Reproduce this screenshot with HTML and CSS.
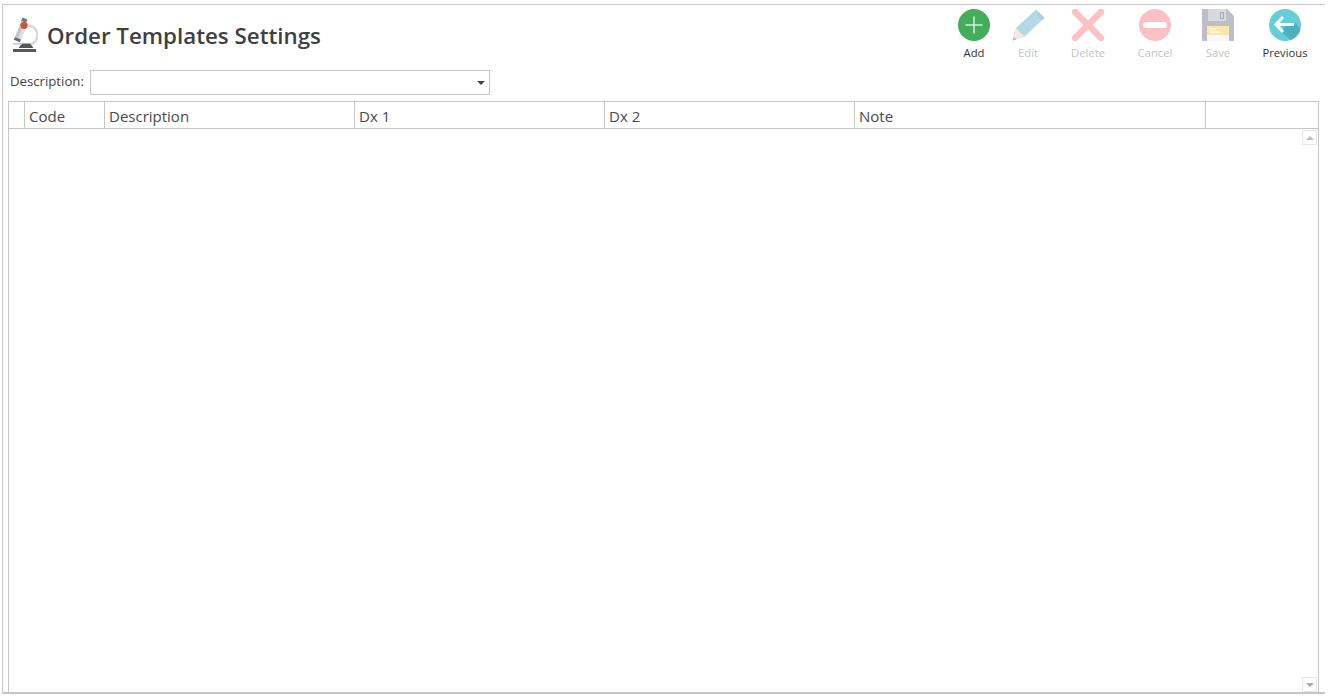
FILE: index.html
```html
<!DOCTYPE html>
<html lang="en">
<head>
<meta charset="utf-8">
<title>Order Templates Settings</title>
<link rel="stylesheet" href="styles.css">
</head>
<body>
<div class="frame">
  <header class="topbar">
    <div class="heading">
      <svg class="logo" width="26" height="38" viewBox="0 0 26 38">
        <path d="M14 9.500 A9.500 9.500 0 0 1 17 29" fill="none" stroke="#d9d9db" stroke-width="2.500"/>
        <path d="M10 27.500 h8 l3.500 4.500 h-15z" fill="#55565a"/>
        <rect x="1" y="27" width="9" height="1.600" fill="#a9d3ee"/>
        <rect x="1" y="33" width="23" height="3" fill="#58595d"/>
        <path d="M10.500 1.500 l5 2 -1.400 3.500 -5 -2z" fill="#77787c"/>
        <path d="M9.500 5 l6 2.500 -6.500 16 -6 -2.500z" fill="#c3c4c8"/>
        <path d="M12.500 6.300 l3 1.200 -6.500 16 -3 -1.200z" fill="#dedfe2"/>
        <path d="M3 21 l6 2.500 -1.200 2.800 -6 -2.500z" fill="#6d6e72"/>
        <circle cx="12" cy="9.500" r="3.500" fill="#c4573f"/>
      </svg>
      <h1 class="title">Order Templates Settings</h1>
    </div>
    <nav class="actions">
      <div class="action action-add">
        <svg class="icon" width="32" height="32" viewBox="0 0 32 32">
          <circle cx="16" cy="16" r="16" fill="#43ad5b"/>
          <path d="M16 7.500 V24.500 M7.500 16 H24.500" stroke="#d8efdd" stroke-width="1.500"/>
        </svg>
        <span class="label">Add</span>
      </div>
      <div class="action action-edit">
        <svg class="icon" width="34" height="32" viewBox="0 0 34 32">
          <path d="M1.500 31.500 L5 19 L25 0.500 L33.500 9 L13 28z" fill="#b3d9e8"/>
          <path d="M28 3 L33.500 9 L31.500 11 L25.500 5z" fill="#a8d0e2"/>
          <path d="M1.500 31.500 L5 19 L13.500 27.500z" fill="#f8e6e0"/>
          <path d="M1.500 31.500 L2.500 27.500 L5.500 30.500z" fill="#a6c8d8"/>
        </svg>
        <span class="label label-off">Edit</span>
      </div>
      <div class="action action-delete">
        <svg class="icon" width="32" height="32" viewBox="0 0 32 32">
          <path d="M3 3 L29 29 M29 3 L3 29" stroke="#fcc1c3" stroke-width="6.500" stroke-linecap="square"/>
        </svg>
        <span class="label label-off">Delete</span>
      </div>
      <div class="action action-cancel">
        <svg class="icon" width="32" height="32" viewBox="0 0 32 32">
          <circle cx="16" cy="16" r="16" fill="#fac0c3"/>
          <rect x="4" y="13" width="24" height="6" rx="3" fill="#fff"/>
        </svg>
        <span class="label label-off">Cancel</span>
      </div>
      <div class="action action-save">
        <svg class="icon" width="32" height="32" viewBox="0 0 32 32">
          <path d="M0 0 H25 L32 7 V32 H0z" fill="#bcbec8"/>
          <path d="M6 0 H24 V12 H6z" fill="#d8d9de"/>
          <path d="M18 3 H22 V10 H18z" fill="#a6a8b2"/>
          <path d="M19 4 H21 V9 H19z" fill="#d8d9de"/>
          <rect x="5" y="17" width="22" height="15" fill="#f6f7fa"/>
          <rect x="5" y="17" width="22" height="9" fill="#fbe7ab"/>
          <path d="M8 20 H14 M8 23 H18" stroke="#fff" stroke-width="1"/>
        </svg>
        <span class="label label-off">Save</span>
      </div>
      <div class="action action-prev">
        <svg class="icon" width="32" height="32" viewBox="0 0 32 32">
          <circle cx="16" cy="16" r="16" fill="#65ced7"/>
          <path d="M12 23 L17 16 H26 V13 L31.500 20 A16 16 0 0 1 22 31z" fill="#4fb1bd"/>
          <path d="M14 8 L7 15.500 L14 23 M7.500 15.500 H25" fill="none" stroke="#fff" stroke-width="3"/>
        </svg>
        <span class="label">Previous</span>
      </div>
    </nav>
  </header>
  <div class="filter">
    <label class="filter-label">Description:</label>
    <div class="combo"><span class="combo-arrow"></span></div>
  </div>
  <section class="grid">
    <div class="grid-head">
      <div class="cell cell-indicator"></div>
      <div class="cell cell-code">Code</div>
      <div class="cell cell-wide">Description</div>
      <div class="cell cell-wide">Dx 1</div>
      <div class="cell cell-wide">Dx 2</div>
      <div class="cell cell-note">Note</div>
      <div class="cell cell-end"></div>
    </div>
    <div class="grid-body">
      <div class="scroll">
        <button class="scroll-btn" type="button"><span class="tri tri-up"></span></button>
        <button class="scroll-btn" type="button"><span class="tri tri-down"></span></button>
      </div>
    </div>
  </section>
</div>
</body>
</html>
```
FILE: styles.css
```css
* { box-sizing: border-box; }
html, body { height: 100%; }
body {
  margin: 0;
  background: #fff;
  font-family: "Open Sans", "Noto Sans", sans-serif;
  overflow: hidden;
}
.frame {
  height: 690px;
  width: 1323px;
  margin: 4px 0 0 2px;
  border: 1px solid #c6c6c6;
  border-right: 0;
  border-bottom: 2px solid #c6c6c6;
  display: flex;
  flex-direction: column;
  padding: 0 0 0 5px;
}
.topbar {
  height: 65px;
  flex: none;
  display: flex;
  justify-content: space-between;
}
.heading {
  display: flex;
  align-items: flex-start;
  gap: 9px;
  padding: 11px 0 0 4px;
}
.logo { display: block; flex: none; }
.title {
  margin: 4px 0 0;
  font-size: 22.320px;
  line-height: 32px;
  font-weight: 600;
  color: #3f3f3f;
  white-space: nowrap;
}
.actions { display: flex; margin-right: 0; }
.action {
  display: flex;
  flex-direction: column;
  align-items: center;
  padding-top: 4px;
}
.action-add { width: 54px; }
.action-edit { width: 54px; }
.action-delete { width: 66px; }
.action-cancel { width: 68px; }
.action-save { width: 56px; padding-left: 2px; }
.action-prev { width: 80px; }
.icon { display: block; flex: none; }
.label {
  margin-top: 4px;
  font-size: 11.250px;
  line-height: 16px;
  color: #333;
  white-space: nowrap;
}
.label-off { color: #c4c4c4; }
.filter {
  height: 25px;
  flex: none;
  display: flex;
  align-items: center;
  padding-left: 2px;
}
.filter-label {
  width: 80px;
  flex: none;
  font-size: 13.200px;
  line-height: 23px;
  color: #444;
  white-space: nowrap;
  align-self: flex-start;
}
.combo {
  width: 400px;
  height: 25px;
  border: 1px solid #c6c6c6;
  display: flex;
  align-items: center;
  justify-content: flex-end;
  padding-right: 4px;
}
.combo-arrow {
  width: 0;
  height: 0;
  border-left: 4px solid transparent;
  border-right: 4px solid transparent;
  border-top: 4px solid #444;
  margin-top: 1px;
}
.grid {
  margin-top: 6px;
  margin-right: 6px;
  flex: 1;
  min-height: 0;
  display: flex;
  flex-direction: column;
  border: 1px solid #c6c6c6;
  border-bottom: 0;
}
.grid-head {
  height: 27px;
  flex: none;
  display: flex;
  border-bottom: 1px solid #c6c6c6;
}
.cell {
  flex: none;
  border-right: 1px solid #c6c6c6;
  padding-left: 4px;
  font-size: 15px;
  line-height: 29px;
  color: #4a4a4a;
  white-space: nowrap;
}
.cell-indicator { width: 16px; }
.cell-code { width: 80px; }
.cell-wide { width: 250px; }
.cell-note { width: 351px; }
.cell-end { flex: 1; border-right: 0; }
.grid-body { flex: 1; min-height: 0; display: flex; justify-content: flex-end; }
.scroll {
  width: 16px;
  display: flex;
  flex-direction: column;
  justify-content: space-between;
  padding: 1px 0 0;
}
.scroll-btn {
  width: 15px;
  height: 15px;
  padding: 0;
  background: #fff;
  border: 1px solid #e6e6e6;
  display: flex;
  align-items: center;
  justify-content: center;
}
.tri {
  width: 0;
  height: 0;
  border-left: 4px solid transparent;
  border-right: 4px solid transparent;
}
.tri-up { border-bottom: 4px solid #bdbdbd; }
.tri-down { border-top: 4px solid #a8a8a8; }
```
